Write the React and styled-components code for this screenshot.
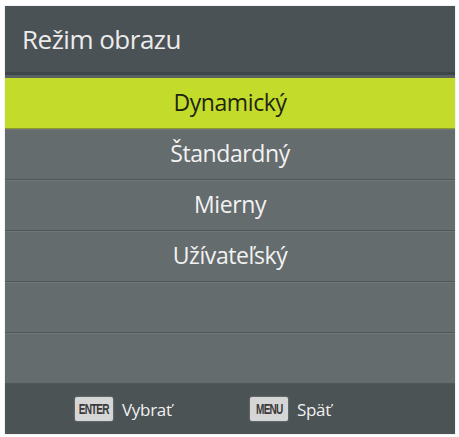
import React from "react";
import styled, { createGlobalStyle } from "styled-components";

const Global = createGlobalStyle`
  html, body { margin: 0; padding: 0; background: #ffffff; }
  body { font-family: "Open Sans", "Noto Sans", sans-serif; }
`;

const Page = styled.div`
  width: 459px;
  height: 437px;
  padding: 6px 4px 2px 5px;
  box-sizing: border-box;
`;

const Panel = styled.div`
  width: 450px;
  display: flex;
  flex-direction: column;
  background: #636b6d;
  box-shadow: 0 0 1px rgba(0, 0, 0, 0.3);
`;

const Header = styled.div`
  height: 66px;
  display: flex;
  align-items: center;
  padding-left: 17px;
  background: #4a5256;
  color: #ececec;
  font-size: 26px;
  letter-spacing: -0.5px;
`;

const HeaderRule = styled.div`
  height: 6px;
  background: linear-gradient(#3f4649 0, #3f4649 3px, #565e62 3px, #5a6266 6px);
`;

const List = styled.div`
  display: flex;
  flex-direction: column;
`;

const Row = styled.div`
  height: 51px;
  display: flex;
  align-items: center;
  justify-content: center;
  padding-bottom: 2px;
  box-sizing: border-box;
  font-size: 23px;
  letter-spacing: -0.4px;
  color: ${(p) => (p.$active ? "#1f2410" : "#f2f2f2")};
  background: ${(p) => (p.$active ? "#c3dc2b" : "#646c6e")};
  border-bottom: 1px solid ${(p) => (p.$active ? "#8a9a2a" : "#4f5658")};
  box-shadow: ${(p) => (p.$active ? "none" : "inset 0 1px 0 #6f7779")};
`;

const Footer = styled.div`
  height: 50px;
  display: flex;
  align-items: center;
  background: #4b5355;
  padding-left: 70px;
`;

const Hint = styled.div`
  display: flex;
  align-items: center;
  width: ${(p) => p.$w}px;
  color: #f0f0f0;
  font-size: 17px;
  letter-spacing: -0.3px;
`;

const Key = styled.span`
  width: 38px;
  height: 24px;
  box-sizing: border-box;
  background: #d6d6d6;
  border-radius: 2px;
  display: inline-flex;
  align-items: center;
  justify-content: center;
  margin-right: 9px;
  box-shadow: 0 0 2px rgba(255, 255, 255, 0.4);
  overflow: hidden;
`;

const KeyLabel = styled.span`
  display: inline-block;
  color: #3a3a3a;
  font-family: "Liberation Sans", sans-serif;
  font-weight: bold;
  font-size: 14px;
  letter-spacing: -1.2px;
  transform: scaleX(0.72);
  white-space: nowrap;
`;

const items = ["Dynamický", "Štandardný", "Mierny", "Užívateľský", "", ""];

export default function App() {
  return (
    <>
      <Global />
      <Page>
        <Panel>
          <Header>Režim obrazu</Header>
          <HeaderRule />
          <List>
            {items.map((t, i) => (
              <Row key={i} $active={i === 0}>
                {t}
              </Row>
            ))}
          </List>
          <Footer>
            <Hint $w={175}>
              <Key>
                <KeyLabel>ENTER</KeyLabel>
              </Key>
              Vybrať
            </Hint>
            <Hint $w={120}>
              <Key>
                <KeyLabel>MENU</KeyLabel>
              </Key>
              Späť
            </Hint>
          </Footer>
        </Panel>
      </Page>
    </>
  );
}
